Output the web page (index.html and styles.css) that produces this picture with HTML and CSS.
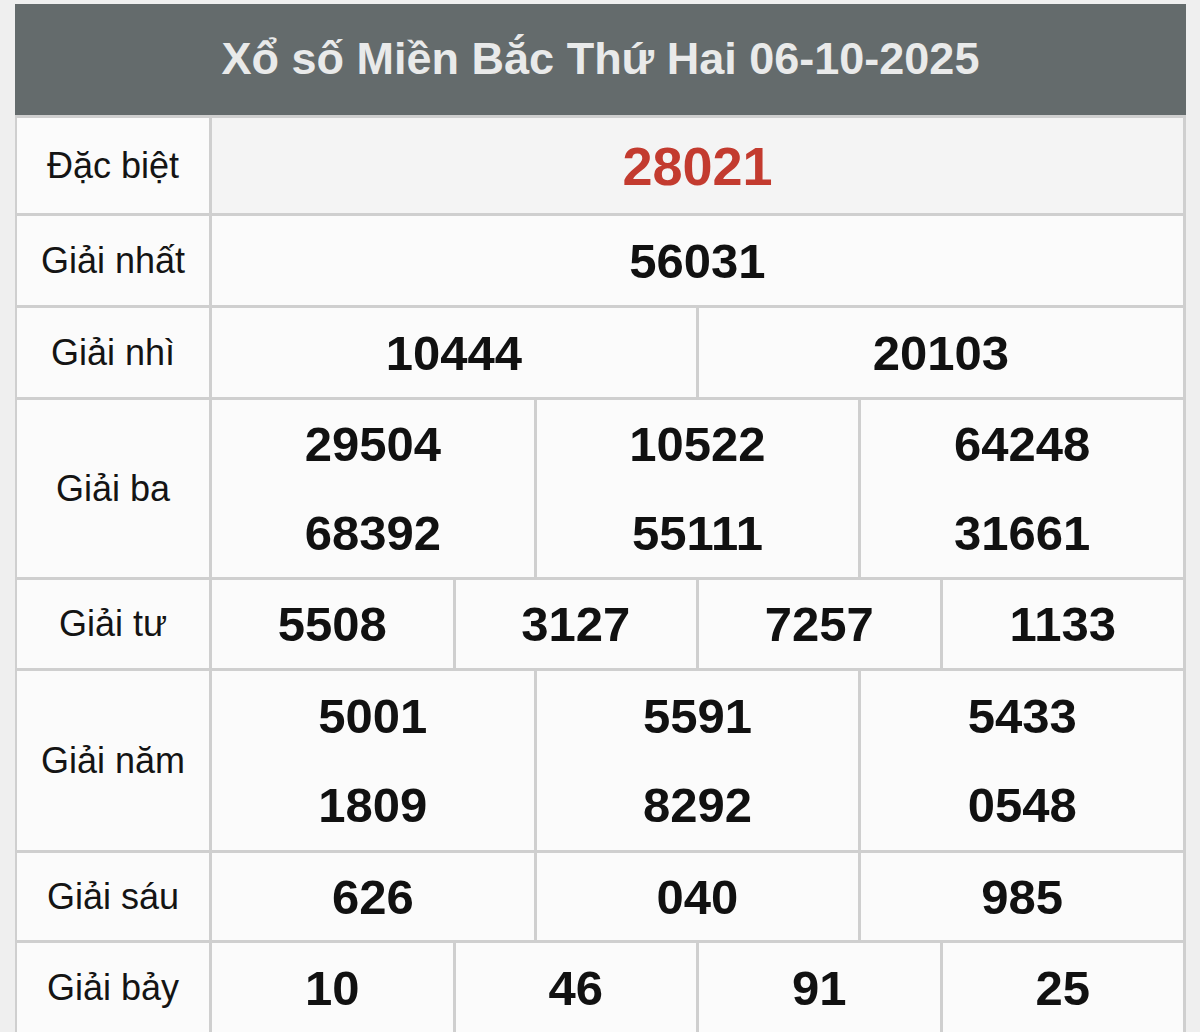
FILE: index.html
```html
<!DOCTYPE html>
<html lang="vi">
<head>
<meta charset="utf-8">
<title>Xổ số Miền Bắc Thứ Hai 06-10-2025</title>
<link rel="stylesheet" href="styles.css">
</head>
<body>
<div class="board">
  <div class="title">Xổ số Miền Bắc Thứ Hai 06-10-2025</div>
  <div class="table">
    <div class="row r-special">
      <div class="label">Đặc biệt</div>
      <div class="vals c1"><div class="num special">28021</div></div>
    </div>
    <div class="row r-1">
      <div class="label">Giải nhất</div>
      <div class="vals c1"><div class="num">56031</div></div>
    </div>
    <div class="row r-1">
      <div class="label">Giải nhì</div>
      <div class="vals c2"><div class="num">10444</div><div class="num">20103</div></div>
    </div>
    <div class="row r-ba">
      <div class="label">Giải ba</div>
      <div class="vals c3">
        <div class="stack"><div class="num">29504</div><div class="num">68392</div></div>
        <div class="stack"><div class="num">10522</div><div class="num">55111</div></div>
        <div class="stack"><div class="num">64248</div><div class="num">31661</div></div>
      </div>
    </div>
    <div class="row r-tu">
      <div class="label">Giải tư</div>
      <div class="vals c4"><div class="num">5508</div><div class="num">3127</div><div class="num">7257</div><div class="num">1133</div></div>
    </div>
    <div class="row r-nam">
      <div class="label">Giải năm</div>
      <div class="vals c3">
        <div class="stack"><div class="num">5001</div><div class="num">1809</div></div>
        <div class="stack"><div class="num">5591</div><div class="num">8292</div></div>
        <div class="stack"><div class="num">5433</div><div class="num">0548</div></div>
      </div>
    </div>
    <div class="row r-sau">
      <div class="label">Giải sáu</div>
      <div class="vals c3"><div class="num">626</div><div class="num">040</div><div class="num">985</div></div>
    </div>
    <div class="row r-1">
      <div class="label">Giải bảy</div>
      <div class="vals c4"><div class="num">10</div><div class="num">46</div><div class="num">91</div><div class="num">25</div></div>
    </div>
  </div>
</div>
</body>
</html>
```
FILE: styles.css
```css
html, body {
  margin: 0;
  padding: 0;
  background: #efefef;
  font-family: "Liberation Sans", Arial, sans-serif;
}
.board {
  margin: 4px 0 0 15px;
  width: 1171px;
}
.title {
  height: 111px;
  background: #646b6c;
  color: #e9eaea;
  font-weight: 700;
  font-size: 45px;
  display: flex;
  align-items: center;
  justify-content: center;
  padding-bottom: 2px;
  box-sizing: border-box;
}
.table {
  background: #cfcfcf;
  padding: 3px 3px 0 2px;
  display: flex;
  flex-direction: column;
  gap: 3px;
}
.row {
  display: grid;
  grid-template-columns: 192px 1fr;
  gap: 3px;
  height: 89px;
}
.r-special { height: 95px; }
.r-ba { height: 177px; }
.r-tu { height: 88px; }
.r-nam { height: 179px; }
.r-sau { height: 87px; }
.label {
  background: #fbfbfb;
  display: flex;
  align-items: center;
  justify-content: center;
  font-size: 36px;
  color: #141414;
}
.vals {
  display: grid;
  gap: 3px;
}
.c1 { grid-template-columns: 1fr; }
.c2 { grid-template-columns: 1fr 1fr; }
.c3 { grid-template-columns: 1fr 1fr 1fr; }
.c4 { grid-template-columns: 1fr 1fr 1fr 1fr; }
.num {
  background: #fbfbfb;
  display: flex;
  align-items: center;
  justify-content: center;
  font-weight: 700;
  font-size: 49px;
  color: #111;
}
.r-special .vals .num { background: #f4f4f4; }
.num.special {
  color: #c33b2f;
  font-size: 54px;
}
.stack {
  background: #fbfbfb;
  display: grid;
  grid-template-rows: 1fr 1fr;
}
.stack .num { background: transparent; }
```
